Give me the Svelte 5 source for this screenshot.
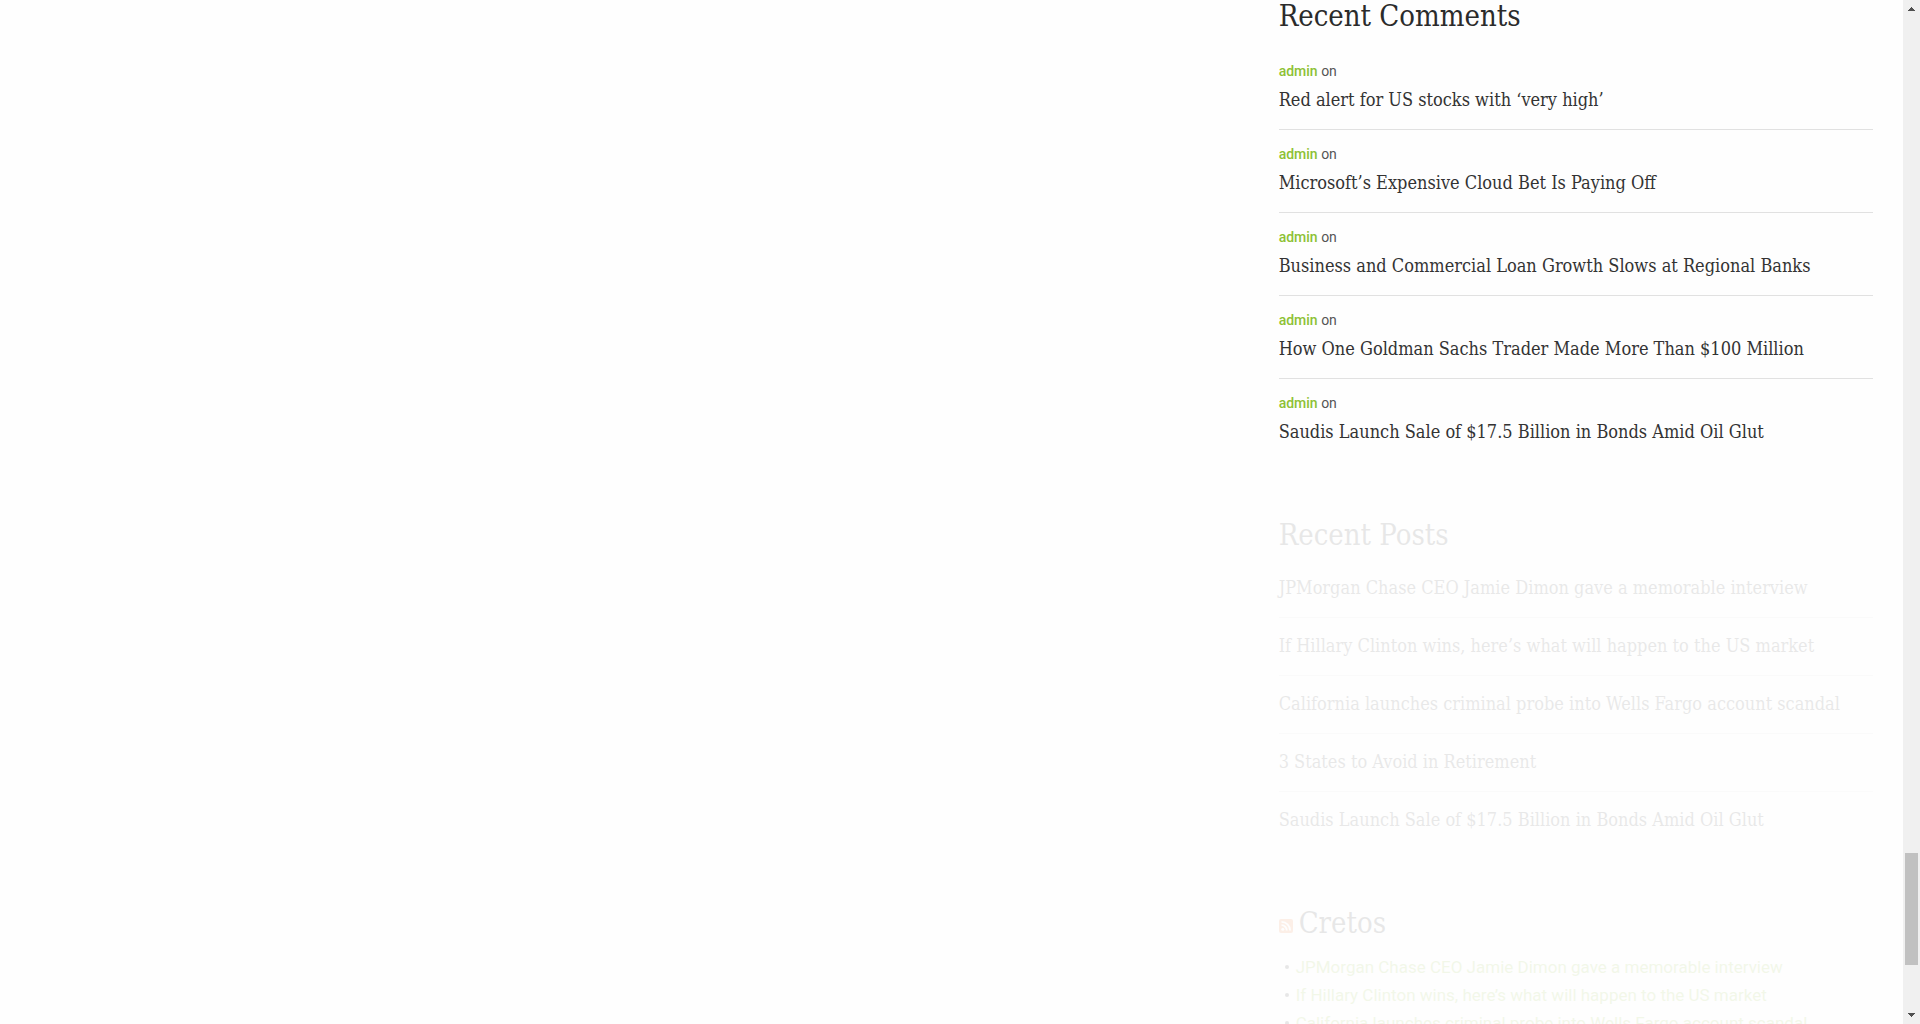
<script>
  const comments = [
    'Red alert for US stocks with ‘very high’',
    'Microsoft’s Expensive Cloud Bet Is Paying Off',
    'Business and Commercial Loan Growth Slows at Regional Banks',
    'How One Goldman Sachs Trader Made More Than $100 Million',
    'Saudis Launch Sale of $17.5 Billion in Bonds Amid Oil Glut',
  ];
  const posts = [
    'JPMorgan Chase CEO Jamie Dimon gave a memorable interview',
    'If Hillary Clinton wins, here’s what will happen to the US market',
    'California launches criminal probe into Wells Fargo account scandal',
    '3 States to Avoid in Retirement',
    'Saudis Launch Sale of $17.5 Billion in Bonds Amid Oil Glut',
  ];
  const feed = posts.slice(0, 3);
</script>

<div class="window">
  <div class="page">
    <main class="content"></main>
    <aside class="sidebar">
      <section class="widget">
        <h2>Recent Comments</h2>
        <ul class="entries comments">
          {#each comments as title}
            <li>
              <p class="meta"><a class="author" href="#author">admin</a> on</p>
              <a class="title" href="#post">{title}</a>
            </li>
          {/each}
        </ul>
      </section>

      <section class="widget faded">
        <h2>Recent Posts</h2>
        <ul class="entries">
          {#each posts as title}
            <li><a class="title" href="#post">{title}</a></li>
          {/each}
        </ul>
      </section>

      <section class="widget faded">
        <h2 class="feed-heading">
          <a class="rss" href="#feed" aria-label="RSS feed">
            <svg width="14" height="14" viewBox="0 0 14 14" aria-hidden="true">
              <rect width="14" height="14" rx="2" fill="#f3782a" />
              <circle cx="3.8" cy="10.3" r="1.5" fill="#fff" />
              <path d="M2.5 6.2a5.3 5.3 0 0 1 5.3 5.3M2.5 2.9a8.6 8.6 0 0 1 8.6 8.6" fill="none" stroke="#fff" stroke-width="1.8" />
            </svg>
          </a>
          <a href="#cretos">Cretos</a>
        </h2>
        <ul class="feed">
          {#each feed as title}
            <li><a href="#post">{title}</a></li>
          {/each}
        </ul>
      </section>
    </aside>
  </div>

  <div class="scrollbar" aria-hidden="true">
    <svg width="17" height="17" viewBox="0 0 17 17" shape-rendering="crispEdges">
      <path d="M8 7h1v1h1v1h1v1h1v1H5v-1h1V9h1V8h1z" fill="#505050" />
    </svg>
    <span></span>
    <div class="thumb"></div>
    <span></span>
    <svg width="17" height="17" viewBox="0 0 17 17" shape-rendering="crispEdges">
      <path d="M5 6h7v1h-1v1h-1v1H9v1H8V9H7V8H6V7H5z" fill="#505050" />
    </svg>
  </div>
</div>

<style>
  :global(body) {
    margin: 0;
    background: #fefefe;
  }
  .window {
    display: flex;
    height: 100vh;
    overflow: hidden;
    font-family: Roboto, sans-serif;
    color: #555;
  }
  .page {
    flex: 1;
    display: grid;
    grid-template-columns: 2fr 1fr;
    padding: 0 15px;
    min-width: 0;
  }
  .sidebar {
    padding: 0 15px;
    min-width: 0;
  }
  .widget {
    margin-bottom: 73px;
  }
  .faded {
    opacity: 0.1;
  }
  h2 {
    margin: 0 0 23px;
    font: 400 29px/32px 'Roboto Slab', 'DejaVu Serif Condensed', 'DejaVu Serif', serif;
    color: #2b2b2b;
  }
  a {
    color: inherit;
    text-decoration: none;
  }
  ul {
    margin: 0;
    padding: 0;
    list-style: none;
  }
  .comments {
    padding-top: 6px;
  }
  .entries li {
    padding-bottom: 15px;
    margin-bottom: 14px;
    border-bottom: 1px solid #e1e1e1;
  }
  .entries li:last-child {
    padding-bottom: 0;
    margin-bottom: 0;
    border-bottom: 0;
  }
  .meta {
    margin: 0 0 4px;
    font-size: 14px;
    line-height: 21px;
  }
  .author {
    font-weight: 500;
    color: #8dc135;
  }
  .title {
    display: block;
    font: 400 18px/28px 'Roboto Slab', 'DejaVu Serif Condensed', 'DejaVu Serif', serif;
    color: #333;
    white-space: nowrap;
  }
  .feed-heading {
    display: flex;
    align-items: baseline;
    gap: 6px;
    margin-bottom: 14px;
  }
  .rss {
    line-height: 14px;
  }
  .feed {
    padding-left: 17px;
    font-size: 17px;
    line-height: 28px;
    color: #2b2b2b;
  }
  .feed li {
    position: relative;
    white-space: nowrap;
  }
  .feed li::before {
    content: '';
    position: absolute;
    left: -11px;
    top: 12px;
    width: 4px;
    height: 4px;
    border-radius: 50%;
    background: #2b2b2b;
  }
  .feed a {
    color: #8dc135;
  }
  .scrollbar {
    width: 17px;
    display: grid;
    grid-template-rows: 17px 836fr 112fr 42fr 17px;
    background: #f0f0f0;
  }
  .thumb {
    margin: 0 2px;
    background: #c1c1c1;
  }
</style>
